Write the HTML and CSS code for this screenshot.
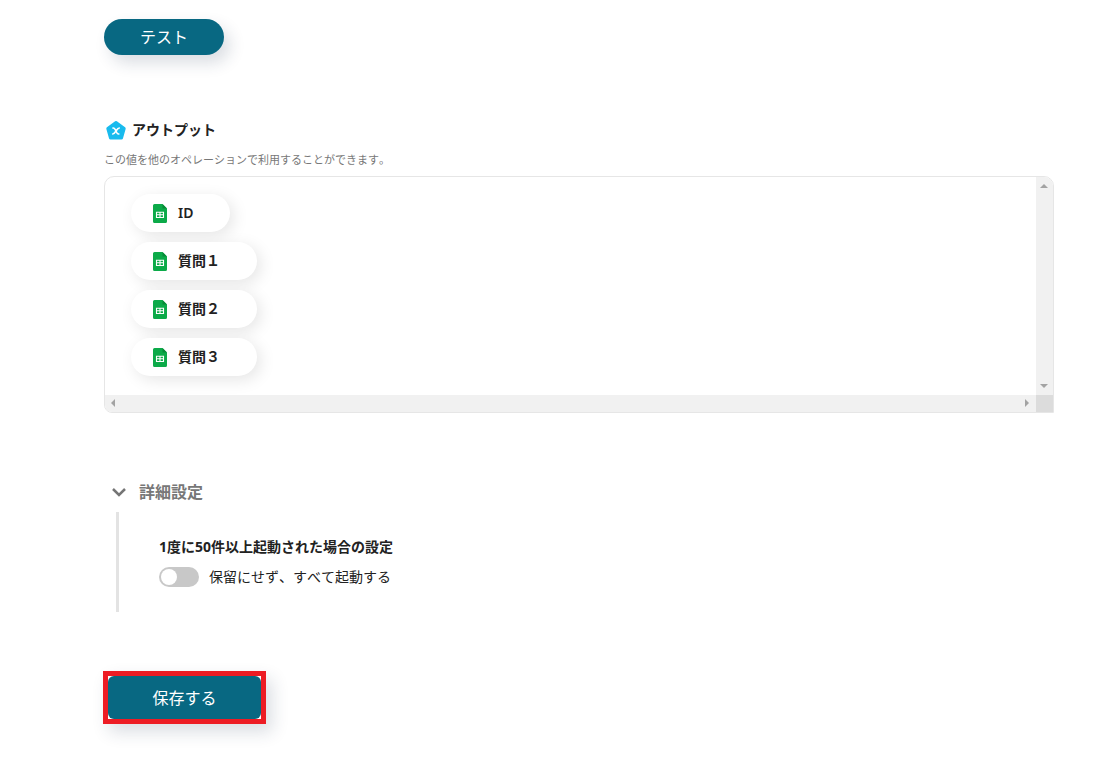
FILE: index.html
```html
<!DOCTYPE html>
<html lang="ja">
<head>
    <meta charset="UTF-8">
    <title>アウトプット</title>
    <meta name="viewport" content="width=device-width, initial-scale=1">
    <link rel="stylesheet" href="styles.css">
</head>
<body>
    <!-- sheet icon shared by the output items -->
    <svg class="sprite" aria-hidden="true">
        <symbol id="sheet" viewBox="0 0 14 19">
            <path fill="#0caa49" d="M1.500 0H9.500l4.500 4.500v13a1.500 1.500 0 0 1-1.500 1.500h-11A1.500 1.500 0 0 1 0 17.500v-16A1.500 1.500 0 0 1 1.500 0z"/>
            <path fill="#078a38" d="M9.500 0l4.500 4.500H9.500z"/>
            <path fill="none" stroke="#fff" stroke-width="1.100" d="M3.500 8.200h7v5.300h-7zM7 8.200v5.300M3.500 10.800h7"/>
        </symbol>
    </svg>

    <main class="page">
        <button class="button button-test" type="button">テスト</button>

        <section class="output">
            <h2 class="output-title">
                <svg class="output-icon" viewBox="0 0 20 20" aria-hidden="true">
                    <path fill="#19bbee" stroke="#19bbee" stroke-width="3" stroke-linejoin="round" d="M10 2.500l8.200 6L15.500 18h-11L1.800 8.500z"/>
                    <path fill="none" stroke="#fff" stroke-width="1.600" stroke-linecap="round" d="M7 8c1.500-.3 2 .5 3 3s1.500 3.300 2.800 3M13.300 8c-1.300 0-2 1-3.300 3s-2 3-3.300 3"/>
                </svg>
                アウトプット
            </h2>
            <p class="output-text">この値を他のオペレーションで利用することができます。</p>

            <div class="output-box">
                <ul class="items">
                    <li class="item"><svg class="item-icon" aria-hidden="true"><use href="#sheet"/></svg>ID</li>
                    <li class="item"><svg class="item-icon" aria-hidden="true"><use href="#sheet"/></svg>質問１</li>
                    <li class="item"><svg class="item-icon" aria-hidden="true"><use href="#sheet"/></svg>質問２</li>
                    <li class="item"><svg class="item-icon" aria-hidden="true"><use href="#sheet"/></svg>質問３</li>
                </ul>
                <div class="bar bar-vertical" aria-hidden="true">
                    <svg class="arrow" viewBox="0 0 17 17"><path d="M4 11l4-4 4 4z"/></svg>
                    <svg class="arrow" viewBox="0 0 17 17"><path d="M4 6l4 4 4-4z"/></svg>
                </div>
                <div class="bar" aria-hidden="true">
                    <svg class="arrow" viewBox="0 0 17 17"><path d="M10 4L6 8l4 4z"/></svg>
                    <svg class="arrow" viewBox="0 0 17 17"><path d="M6 4l4 4-4 4z"/></svg>
                </div>
                <div class="bar-corner"></div>
            </div>
        </section>

        <details class="advanced" open>
            <summary class="advanced-title">
                <svg class="chevron" viewBox="0 0 14 10" aria-hidden="true"><path d="M1 2l6 6 6-6"/></svg>
                詳細設定
            </summary>
            <div class="advanced-body">
                <h3 class="setting-title">1度に50件以上起動された場合の設定</h3>
                <label class="setting">
                    <input class="toggle" type="checkbox">
                    保留にせず、すべて起動する
                </label>
            </div>
        </details>

        <div class="save">
            <button class="button button-save" type="button">保存する</button>
        </div>
    </main>
</body>
</html>
```

FILE: styles.css
```css
* {
    box-sizing: border-box;
}

body {
    margin: 0;
    background: #fff;
    color: #222;
    font-family: "Noto Sans", "Noto Sans CJK JP", sans-serif;
    font-size: 14px;
    font-kerning: none;
    line-height: 20px;
}

h2, h3, p, ul {
    margin: 0;
    padding: 0;
}

.sprite {
    display: none;
}

.page {
    display: flex;
    flex-direction: column;
    align-items: flex-start;
    padding: 19px 59px 40px 104px;
}

/* buttons */
.button {
    border: 0;
    background: #086882;
    color: #fff;
    font-family: inherit;
    font-size: 16px;
    line-height: 24px;
    box-shadow: 6px 8px 16px rgba(30, 50, 80, 0.16);
}

.button-test {
    width: 120px;
    height: 36px;
    border-radius: 18px;
}

/* output */
.output {
    width: 100%;
    margin-top: 65px;
}

.output-title {
    display: flex;
    align-items: center;
    gap: 6px;
    padding-left: 2px;
    font-size: 14px;
    line-height: 20px;
}

.output-icon {
    width: 20px;
    height: 20px;
}

.output-text {
    margin-top: 12px;
    color: #777;
    font-size: 11px;
    line-height: 16px;
}

.output-box {
    display: grid;
    grid-template-columns: 1fr 17px;
    grid-template-rows: auto 17px;
    margin-top: 8px;
    border: 1px solid #e6e6e6;
    border-radius: 10px 10px 0 8px;
    overflow: hidden;
}

.items {
    display: flex;
    flex-direction: column;
    align-items: flex-start;
    gap: 10px;
    padding: 17px 26px 19px;
    overflow: hidden;
    list-style: none;
}

.item {
    display: flex;
    align-items: center;
    gap: 11px;
    height: 38px;
    padding: 0 37px 0 22px;
    border-radius: 19px;
    background: #fff;
    box-shadow: 4px 4px 16px rgba(0, 0, 0, 0.1);
    font-weight: 600;
}

.item-icon {
    width: 14px;
    height: 19px;
}

.bar {
    display: flex;
    justify-content: space-between;
    background: #f1f1f1;
}

.bar-vertical {
    flex-direction: column;
}

.bar-corner {
    background: #dcdcdc;
}

.arrow {
    width: 17px;
    height: 17px;
    fill: #a3a3a3;
}

/* advanced settings */
.advanced {
    margin-top: 67px;
    padding-left: 8px;
}

.advanced-title {
    display: flex;
    align-items: center;
    gap: 13px;
    color: #777;
    font-size: 16px;
    font-weight: 700;
    line-height: 24px;
    list-style: none;
    cursor: pointer;
}

.chevron {
    width: 14px;
    height: 10px;
    fill: none;
    stroke: #757575;
    stroke-width: 2.5;
}

.advanced-body {
    margin: 8px 0 0 4px;
    padding: 25px 0 25px 40px;
    border-left: 3px solid #e3e3e3;
}

.setting-title {
    font-size: 14px;
    line-height: 20px;
}

.setting {
    display: flex;
    align-items: center;
    gap: 10px;
    margin-top: 10px;
}

.toggle {
    appearance: none;
    display: flex;
    width: 40px;
    height: 20px;
    margin: 0;
    padding: 2px;
    border-radius: 10px;
    background: #c8c8c8;
}

.toggle::before {
    content: "";
    width: 16px;
    height: 16px;
    border-radius: 50%;
    background: #fff;
}

.toggle:checked {
    justify-content: flex-end;
    background: #086882;
}

/* save */
.save {
    margin: 59px 0 0 -1px;
    border: 5px solid #ed1c24;
    box-shadow: 6px 8px 16px rgba(30, 50, 80, 0.16);
}

.button-save {
    display: block;
    width: 153px;
    height: 43px;
    border-radius: 6px;
    box-shadow: none;
}
```
